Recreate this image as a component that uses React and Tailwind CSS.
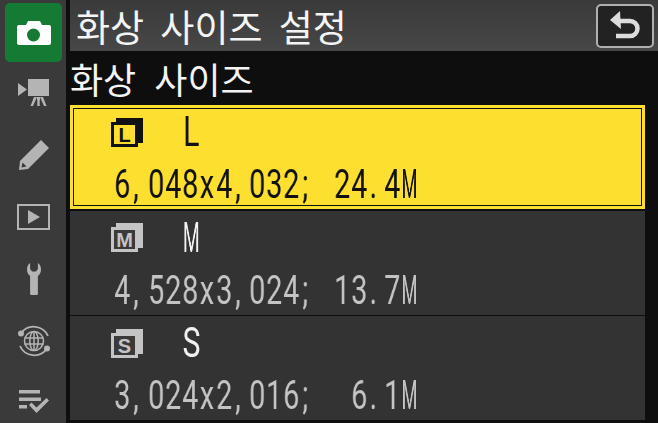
import React from 'react';

const korean = "font-['Noto_Sans_CJK_KR','Noto_Sans',sans-serif]";

// every glyph sits in a fixed 17px cell, squeezed to look like the camera's narrow font
const Glyph = ({ ch, big }) => {
  const punct = ch === ',' || ch === '.' || ch === ';';
  const wide = ch === 'M';
  return (
    <span className="flex h-[46px] w-[16.9px] shrink-0 items-center justify-center">
      <span
        className={`inline-block origin-center whitespace-pre leading-[46px] will-change-transform ${big ? 'text-[42px]' : 'text-[40px]'} ${wide ? 'scale-x-[0.46]' : 'scale-x-[0.72]'} ${punct ? '-translate-x-[3px]' : ''}`}
      >
        {ch}
      </span>
    </span>
  );
};

const Cells = ({ text, color, big, className = '' }) => (
  <div className={`flex font-['Roboto',sans-serif] font-normal ${color} ${className}`} aria-label={text}>
    {text.split('').map((ch, i) => (
      <Glyph key={i} ch={ch} big={big} />
    ))}
  </div>
);

const SizeIcon = ({ letter, fg, bg }) => (
  <svg width="32" height="29" viewBox="0 0 32 29" className="shrink-0">
    <rect x="5" y="0" width="27" height="25" fill={fg} />
    <rect x="0" y="4" width="27" height="25" fill={fg} />
    <rect x="3" y="7" width="21" height="19" fill={bg} />
    <text x="13.500" y="24" textAnchor="middle" fontFamily="Liberation Sans" fontWeight="700" fontSize="20" fill={fg}>{letter}</text>
  </svg>
);

const CameraIcon = () => (
  <svg width="34" height="26" viewBox="0 0 34 26">
    <path d="M2 5h7l2-4h12l2 4h7a2 2 0 0 1 2 2v16a2 2 0 0 1-2 2H2a2 2 0 0 1-2-2V7a2 2 0 0 1 2-2z" fill="#fff" />
    <circle cx="16.500" cy="15" r="6.500" fill="#157a33" />
  </svg>
);

const VideoIcon = () => (
  <svg width="32" height="28" viewBox="0 0 32 28" fill="#b4b4b4">
    <path d="M0 4l9 6.500L0 17z" />
    <rect x="10" y="0" width="21" height="17" />
    <path d="M19 18h3v3h-3zM16 18h3l-4 9h-2.500zM22 18h3l3.500 9H26zM19.300 21h2.400v6h-2.400z" />
  </svg>
);

const PencilIcon = () => (
  <svg width="32" height="32" viewBox="0 0 32 32">
    <path d="M23 1l8 8L10 30 1 31l1-9z" fill="#b4b4b4" />
    <path d="M4.500 23.500l4 4-5 1z" fill="#3a3a3a" />
  </svg>
);

const PlayIcon = () => (
  <svg width="33" height="26" viewBox="0 0 33 26">
    <rect x="1" y="1" width="31" height="24" fill="none" stroke="#b4b4b4" strokeWidth="2" />
    <path d="M11 6l12 7-12 7z" fill="#b4b4b4" />
  </svg>
);

const WrenchIcon = () => (
  <svg width="14" height="32" viewBox="0 0 18 32" preserveAspectRatio="none">
    <path d="M4 0v6l2.500 2.500h5L14 6V0c3 1.500 4 4 4 6.500 0 3-1.500 5-4 6.500v17.500a1.500 1.500 0 0 1-1.500 1.500h-7A1.500 1.500 0 0 1 4 30.500V13C1.500 11.500 0 9.500 0 6.500 0 4 1 1.500 4 0z" fill="#b4b4b4" />
  </svg>
);

const GlobeIcon = () => (
  <svg width="34" height="34" viewBox="0 0 34 34" fill="none" stroke="#b4b4b4">
    <path d="M4 9.500A15.500 15.500 0 0 1 31 12M30 24.500A15.500 15.500 0 0 1 3 22" strokeWidth="1.800" />
    <circle cx="4" cy="9.500" r="3" fill="#b4b4b4" stroke="none" />
    <circle cx="30" cy="24.500" r="3" fill="#b4b4b4" stroke="none" />
    <circle cx="17" cy="17" r="9.500" strokeWidth="1.500" />
    <ellipse cx="17" cy="17" rx="4.200" ry="9.500" strokeWidth="1.500" />
    <path d="M7.500 14h19M7.500 20h19M17 7.500v19" strokeWidth="1.500" />
  </svg>
);

const ListIcon = () => (
  <svg width="32" height="26" viewBox="0 0 32 26" fill="#b4b4b4">
    <rect x="1" y="0" width="21" height="3.500" />
    <rect x="1" y="7.500" width="22" height="3.500" />
    <rect x="1" y="15" width="8" height="3.500" />
    <path d="M11 15l2.500-2.500 5 5L28.500 8 31 10.500 18.500 23z" />
  </svg>
);

const BackIcon = () => (
  <svg width="30" height="32" viewBox="0 0 30 32" fill="none">
    <path d="M6 11h14a7.500 7.500 0 0 1 0 15H6" stroke="#dcdcdc" strokeWidth="4.500" />
    <path d="M0 10L10 1l1 18z" fill="#dcdcdc" />
  </svg>
);

const navIcons = [VideoIcon, PencilIcon, PlayIcon, WrenchIcon, GlobeIcon, ListIcon];

const rows = [
  { letter: 'L', spec: '6,048x4,032; 24.4M' },
  { letter: 'M', spec: '4,528x3,024; 13.7M' },
  { letter: 'S', spec: '3,024x2,016;  6.1M' },
];

const SizeRow = ({ letter, spec, selected }) => {
  const inner = (
    <>
      <div className={`flex h-[42px] items-center ${selected ? 'pl-[37px]' : 'pl-[41px]'}`}>
        <SizeIcon letter={letter} fg={selected ? '#111' : '#c4c4c4'} bg={selected ? '#fde02f' : '#3a3a3a'} />
        <Cells text={letter} big color={selected ? 'text-[#111]' : 'text-[#f2f2f2]'} className="ml-[40px]" />
      </div>
      <Cells
        text={spec}
        color={selected ? 'text-[#111]' : 'text-[#c4c4c4]'}
        className={`mt-[9px] ${selected ? 'pl-[40px]' : 'pl-[44px]'}`}
      />
    </>
  );

  if (selected) {
    return (
      <div className="h-[104px] bg-[#fde02f] p-[3px]">
        <div className="h-full border border-[#111] pt-[2px]">{inner}</div>
      </div>
    );
  }
  return <div className="mt-[1.500px] h-[104px] bg-[#333333] pt-[6px]">{inner}</div>;
};

export default function App() {
  return (
    <div className="flex h-[423px] w-[658px] overflow-hidden bg-[#0e0e0e]">
      <div className="flex h-full w-[66px] shrink-0 flex-col items-center bg-[#3a3a3a] pl-[1px] pt-[3px]">
        <div className="flex h-[59px] w-[57px] shrink-0 items-center justify-center rounded-[5px] bg-[#157a33]">
          <CameraIcon />
        </div>
        {navIcons.map((Icon, i) => (
          <div key={i} className="flex h-[62px] shrink-0 items-center justify-center first:mt-[2px]">
            <Icon />
          </div>
        ))}
      </div>

      <div className="ml-[4px] flex min-w-0 flex-1 flex-col">
        <div className={`flex h-[51px] shrink-0 items-center justify-between bg-gradient-to-b from-[#3a3a3a] to-[#474747] pl-[6px] pr-[2px] text-[37px] leading-[44px] [word-spacing:8px] text-[#f4f4f4] ${korean}`}>
          <span className="whitespace-pre">화상 사이즈 설정</span>
          <div className="mr-[2px] flex h-[44px] w-[58px] items-center justify-center rounded-[5px] border-2 border-[#b0b0b0] bg-[#222222]">
            <BackIcon />
          </div>
        </div>
        <div className={`flex h-[54px] shrink-0 items-center text-[36px] leading-[44px] [word-spacing:10px] text-[#f4f4f4] ${korean}`}>
          <span className="whitespace-pre">화상 사이즈</span>
        </div>
        <div className="w-[575px]">
          {rows.map((row, i) => (
            <SizeRow key={row.letter} {...row} selected={i === 0} />
          ))}
        </div>
      </div>
    </div>
  );
}
